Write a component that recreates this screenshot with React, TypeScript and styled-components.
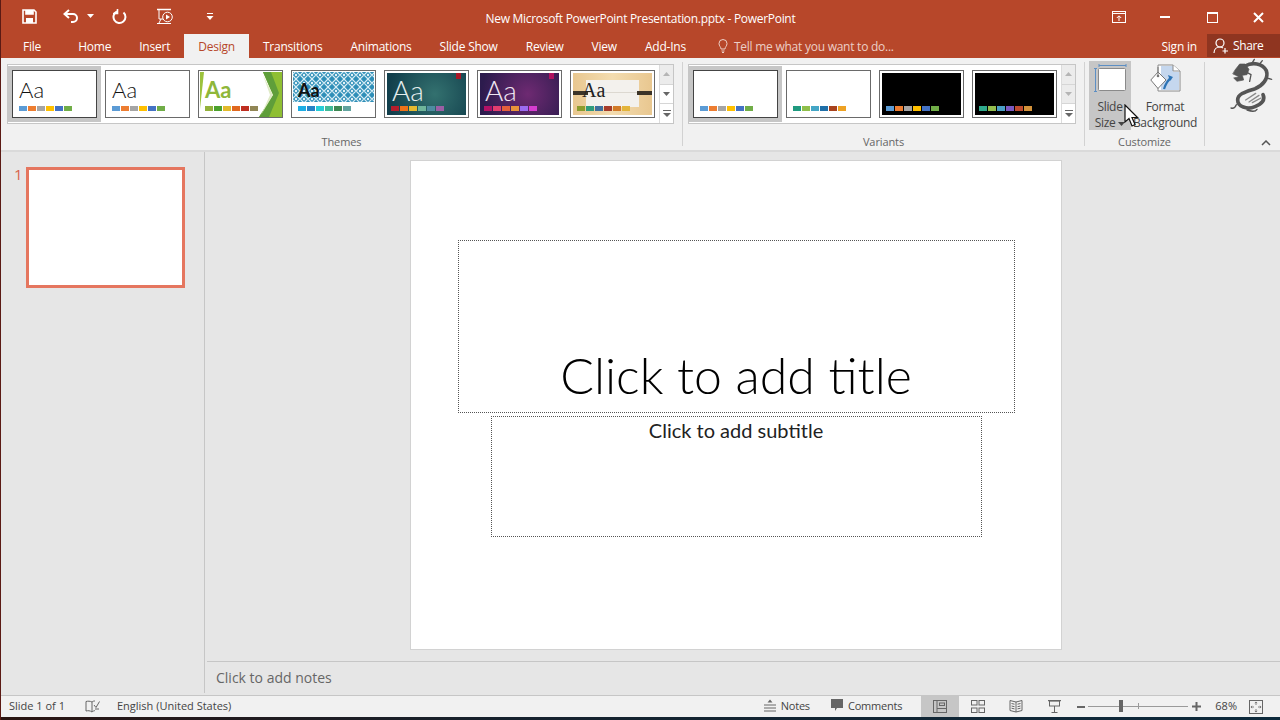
import React, { FC } from 'react';
import styled, { createGlobalStyle } from 'styled-components';

const GlobalStyle = createGlobalStyle`
	html, body {
		margin: 0;
		padding: 0;
		background: #0d2a3c;
		overflow: hidden;
	}
	* {
		box-sizing: border-box;
	}
`;

const UI_FONT = `"Open Sans", "Noto Sans", sans-serif`;

const Window = styled.div`
	width: 1280px;
	height: 720px;
	display: flex;
	flex-direction: column;
	position: relative;
	border-left: 1px solid #5b1a14;
	background: #e6e6e6;
	font-family: ${UI_FONT};
	font-size: 12px;
	color: #444;
	overflow: hidden;
`;

const TitleBar = styled.header`
	height: 30px;
	display: grid;
	grid-template-columns: 1fr auto 1fr;
	align-items: center;
	background: #b7472a;
	color: #fff;
`;

const QuickAccess = styled.div`
	display: flex;
	align-items: center;
	padding: 1px 0 0 20px;
	color: #fff;
`;

const QuickIcon = styled.span<{ $width: number }>`
	display: flex;
	align-items: center;
	justify-content: center;
	width: ${p => p.$width}px;
	height: 30px;
`;

const DocTitle = styled.div`
	font-size: 12px;
	letter-spacing: -0.3px;
	padding-top: 6px;
`;

const WindowControls = styled.div`
	display: flex;
	justify-content: flex-end;
	margin-right: -1px;
	color: #fff;
`;

const WindowButton = styled.span`
	width: 46px;
	height: 30px;
	display: flex;
	align-items: center;
	justify-content: center;
	padding-top: 3px;
	&:nth-child(2) {
		margin-right: 1px;
	}
`;

const TabBar = styled.nav`
	height: 28px;
	display: flex;
	align-items: stretch;
	background: #b7472a;
	color: #fff;
	padding-left: 8px;
`;

const Tab = styled.span<{ $active?: boolean }>`
	display: flex;
	align-items: center;
	margin-top: 4px;
	padding: 0 14px;
	background: ${p => (p.$active ? '#f1f1f1' : 'transparent')};
	color: ${p => (p.$active ? '#b7472a' : '#fff')};
	letter-spacing: -0.22px;
	white-space: nowrap;
	&:first-child {
		margin-right: 9px;
	}
`;

const TellMe = styled.span`
	display: flex;
	align-items: center;
	gap: 6px;
	margin: 4px 0 0 18px;
	color: #eccfc6;
	letter-spacing: -0.25px;
`;

const Account = styled.div`
	margin: 4px 0 0 auto;
	display: flex;
	align-items: center;
	gap: 10px;
	letter-spacing: -0.2px;
`;

const ShareButton = styled.span`
	width: 73px;
	height: 23px;
	margin-bottom: 1px;
	background: #8f3520;
	display: flex;
	align-items: center;
	gap: 4px;
	padding-left: 6px;
	letter-spacing: -0.4px;
`;

const Ribbon = styled.section`
	height: 94px;
	display: flex;
	background: #f1f1f1;
	border-bottom: 2px solid #dadada;
`;

const RibbonGroup = styled.div<{ $width: number; $inset: number }>`
	width: ${p => p.$width}px;
	display: flex;
	flex-direction: column;
	margin: 4px 0;
	padding-left: ${p => p.$inset}px;
	border-right: 1px solid #d2d2d2;
`;

const GroupBody = styled.div`
	flex: 1;
	padding-top: 2px;
	display: flex;
`;

const GroupLabel = styled.div<{ $inset: number }>`
	text-align: center;
	font-size: 11px;
	letter-spacing: -0.1px;
	color: #666;
	height: 16px;
	line-height: 16px;
	margin: 0 0 -4px -${p => p.$inset}px;
`;

const Gallery = styled.div`
	height: 60px;
	display: flex;
	border: 1px solid #c6c6c6;
	background: #fff;
`;

const GalleryItem = styled.div<{ $selected?: boolean }>`
	width: 93px;
	height: 56px;
	margin-top: 1px;
	padding: 4px;
	background: ${p => (p.$selected ? '#c6c6c6' : 'transparent')};
`;

const Thumb = styled.div<{ $bg: string; $ring?: boolean; $dark?: boolean }>`
	position: relative;
	width: 85px;
	height: 48px;
	border: 1px solid ${p => (p.$dark ? '#444' : '#6a6a6a')};
	background: ${p => p.$bg};
	overflow: hidden;
	display: flex;
	flex-direction: column;
	justify-content: flex-end;
	padding: 0 0 6px 6px;
	&::after {
		content: '';
		display: ${p => (p.$ring ? 'block' : 'none')};
		position: absolute;
		inset: 0;
		border: 2px solid #fff;
	}
`;

const ThumbAa = styled.span<{ $color: string; $font: string; $weight: number; $size: number; $shift: number }>`
	position: relative;
	font-family: ${p => p.$font};
	font-size: ${p => p.$size}px;
	font-weight: ${p => p.$weight};
	line-height: 20px;
	height: 20px;
	margin: 0 0 6px ${p => p.$shift}px;
	color: ${p => p.$color};
`;

const SwatchRow = styled.div`
	position: relative;
	display: flex;
	gap: 1px;
	height: 5px;
`;

const Swatch = styled.span<{ $color: string }>`
	width: 8px;
	height: 5px;
	background: ${p => p.$color};
`;

const ThumbArtSvg = styled.svg`
	position: absolute;
	left: 0;
	top: 0;
	width: 83px;
	height: 46px;
`;

const GalleryScroll = styled.div`
	width: 14px;
	display: flex;
	flex-direction: column;
	border-left: 1px solid #dcdcdc;
`;

const ScrollButton = styled.span<{ $disabled?: boolean }>`
	flex: 1;
	display: flex;
	align-items: center;
	justify-content: center;
	background: ${p => (p.$disabled ? '#ececec' : '#fff')};
	color: ${p => (p.$disabled ? '#b5b5b5' : '#666')};
	border-bottom: 1px solid #d6d6d6;
	&:last-child {
		border-bottom: none;
	}
`;

const CommandRow = styled.div`
	display: flex;
	gap: 4px;
	margin-top: -3px;
`;

const CommandButton = styled.div<{ $width: number; $active?: boolean }>`
	width: ${p => p.$width}px;
	height: 69px;
	display: flex;
	flex-direction: column;
	align-items: center;
	background: ${p => (p.$active ? '#c6c6c6' : 'transparent')};
	color: #444;
	line-height: 16px;
	white-space: nowrap;
	letter-spacing: -0.3px;
`;

const CommandIcon = styled.span`
	height: 38px;
	flex-shrink: 0;
	display: flex;
	align-items: flex-start;
	padding-top: 3px;
`;

const DragonSlot = styled.div`
	flex: 1;
	position: relative;
	display: flex;
	justify-content: flex-end;
	align-items: flex-start;
	padding-right: 5px;
`;

const CollapseRibbon = styled.span`
	position: absolute;
	right: 9px;
	bottom: 4px;
	display: flex;
	color: #555;
`;

const Workspace = styled.main`
	flex: 1;
	display: flex;
	min-height: 0;
`;

const ThumbPanel = styled.aside`
	width: 204px;
	display: flex;
	align-items: flex-start;
	gap: 4px;
	padding: 15px 0 0 13px;
	border-right: 1px solid #c6c6c6;
	margin-bottom: 2px;
`;

const SlideNumber = styled.span`
	font-size: 15px;
	line-height: 16px;
	margin-top: -1px;
	color: #d9634a;
	width: 8px;
`;

const SlideThumb = styled.div`
	width: 159px;
	height: 121px;
	background: #fff;
	border: 3px solid #e5765f;
`;

const Editor = styled.div`
	flex: 1;
	display: flex;
	flex-direction: column;
	min-width: 0;
`;

const Stage = styled.div`
	flex: 1;
	display: flex;
	justify-content: center;
	padding: 8px 13px 0 0;
`;

const Slide = styled.div`
	width: 652px;
	height: 490px;
	background: #fff;
	border: 1px solid #d2d2d2;
	display: flex;
	flex-direction: column;
	align-items: center;
	padding-top: 79px;
	gap: 3px;
`;

const TitleHolder = styled.div`
	width: 557px;
	height: 173px;
	border: 1px dotted #555;
	display: flex;
	align-items: flex-end;
	justify-content: center;
	font-family: Lato, "Liberation Sans", sans-serif;
	font-weight: 300;
	font-size: 50px;
	line-height: 60px;
	color: #000;
	padding-bottom: 7px;
`;

const SubtitleHolder = styled.div`
	width: 491px;
	height: 121px;
	border: 1px dotted #555;
	text-align: center;
	font-family: Lato, "Liberation Sans", sans-serif;
	font-size: 20px;
	line-height: 26px;
	color: #222;
`;

const NotesPane = styled.div`
	height: 34px;
	margin-left: 2px;
	border-top: 1px solid #c6c6c6;
	display: flex;
	align-items: center;
	padding: 0 0 2px 9px;
	font-size: 14px;
	color: #666;
`;

const StatusBar = styled.footer`
	height: 22px;
	display: flex;
	align-items: stretch;
	background: #f1f1f1;
	border-top: 1px solid #c6c6c6;
	font-size: 11px;
	color: #444;
`;

const StatusText = styled.span`
	display: flex;
	align-items: center;
	gap: 5px;
	white-space: nowrap;
	line-height: 15px;
	padding-bottom: 3px;
`;

const StatusLeft = styled.div`
	display: flex;
	align-items: center;
	padding-left: 8px;
	gap: 20px;
`;

const SpellSlot = styled.span`
	display: flex;
	margin-right: -3px;
`;

const StatusRight = styled.div`
	margin-left: auto;
	display: flex;
	align-items: stretch;
	padding-right: 5px;
`;

const ViewButton = styled.span<{ $active?: boolean }>`
	width: 38px;
	display: flex;
	align-items: center;
	justify-content: center;
	background: ${p => (p.$active ? '#c6c6c6' : 'transparent')};
`;

const NotesToggles = styled.div`
	display: flex;
	align-items: center;
	gap: 21px;
	margin-right: 19px;
	letter-spacing: -0.2px;
`;

const ZoomSlider = styled.div`
	width: 100px;
	height: 1px;
	background: #9a9a9a;
	align-self: center;
	position: relative;
	margin: 0 4px 0 3px;
`;

const ZoomHandle = styled.span`
	position: absolute;
	left: 31px;
	top: -6px;
	width: 4px;
	height: 12px;
	background: #666;
`;

const ZoomTick = styled.span`
	position: absolute;
	left: 50px;
	top: -3px;
	width: 1px;
	height: 6px;
	background: #9a9a9a;
`;

const ZoomSign = styled.span`
	display: flex;
	align-items: center;
	color: #555;
`;

const ZoomMinus = styled(ZoomSign)`
	margin-left: 4px;
`;

const ZoomValue = styled.span`
	display: flex;
	align-items: center;
	margin-left: 14px;
	padding-bottom: 3px;
`;

const DesktopStrip = styled.div`
	height: 3px;
	flex-shrink: 0;
	background: linear-gradient(90deg, #2a1512 0%, #16222e 40%, #0d2a3c 100%);
`;

const Pointer = styled.svg`
	position: absolute;
	left: 1123px;
	top: 104px;
`;

const office = ['#5b9bd5', '#ed7d31', '#a5a5a5', '#ffc000', '#4472c4', '#70ad47'];

type ThemeDef = {
	bg: string;
	colors: string[];
	aa?: string;
	font?: string;
	weight?: number;
	size?: number;
	shift?: number;
	art?: string;
	ring?: boolean;
	dark?: boolean;
};

const themes: ThemeDef[] = [
	{ bg: '#fff', colors: office, dark: true },
	{ bg: '#fff', colors: office },
	{ bg: '#fff', colors: ['#93b13a', '#4ca12c', '#e3b92a', '#e0681f', '#bf2e21', '#918655'], aa: '#8fb73a', weight: 700, art: 'facet' },
	{ bg: '#fff', colors: ['#1cade4', '#2683c6', '#27ced7', '#42ba97', '#3e8853', '#62a39f'], aa: '#111', weight: 700, size: 18, art: 'lattice' },
	{ bg: 'radial-gradient(circle at 60% 50%, #33716f 0%, #123f4c 85%)', colors: ['#b71e2c', '#ee7218', '#e5b92f', '#6fb59a', '#4d8ba0', '#9c5fa5'], aa: '#e6eeee', size: 28, shift: 1, art: 'ribbonRed', ring: true },
	{ bg: 'radial-gradient(circle at 60% 50%, #6e2a72 0%, #2c1b4d 85%)', colors: ['#b31166', '#e33d6f', '#e45f3c', '#e9943a', '#9b6bf2', '#d53dd0'], aa: '#f1e6f2', size: 28, shift: 1, art: 'ribbonPink', ring: true },
	{ bg: 'linear-gradient(90deg, #e8c68e 0%, #f3dcb0 50%, #e8c68e 100%)', colors: ['#8c9d2d', '#2f9c7c', '#3f6f9d', '#a63b2a', '#d27a27', '#e3b43a'], aa: '#222', font: '"Liberation Serif", serif', size: 20, shift: 5, art: 'wood', ring: true },
];

const variants: ThemeDef[] = [
	{ bg: '#fff', colors: office, dark: true },
	{ bg: '#fff', colors: ['#1f9a7f', '#8fbf4a', '#44a6c6', '#1f6fa8', '#a9431e', '#eea224'] },
	{ bg: '#000', colors: office, ring: true },
	{ bg: '#000', colors: ['#2fa98c', '#93bd4e', '#4a9fc6', '#7a58c1', '#bc4a2f', '#d3923a'], ring: true },
];

const ThumbArt: FC<{ kind: string }> = ({ kind }) => {
	if (kind === 'facet') {
		return <ThumbArtSvg viewBox='0 0 83 46'>
			<polygon points='1,1 5,1 1,38' fill='#9cc23c' />
			<polygon points='64,1 83,1 83,46 60,46 74,24' fill='#8fbf33' />
			<polygon points='64,1 74,24 60,46 70,46 80,22 72,1' fill='#5f9e3a' />
			<polygon points='64,4 74,24 62,44 71,24' fill='#dfeac6' />
		</ThumbArtSvg>;
	}
	if (kind === 'lattice') {
		return <ThumbArtSvg viewBox='0 0 83 46'>
			<defs>
				<pattern id='lattice' width='8' height='8' patternUnits='userSpaceOnUse'>
					<rect width='8' height='8' fill='#2f8fb8' />
					<path d='M0 4 L4 0 L8 4 L4 8 Z' fill='none' stroke='#d8edf5' strokeWidth='1.2' />
					<circle cx='4' cy='4' r='1.2' fill='#e6f3f8' />
				</pattern>
			</defs>
			<rect x='1' y='1' width='81' height='30' fill='url(#lattice)' />
		</ThumbArtSvg>;
	}
	if (kind === 'ribbonRed' || kind === 'ribbonPink') {
		return <ThumbArtSvg viewBox='0 0 83 46'>
			<rect x='71' y='1' width='5' height='7' fill={kind === 'ribbonRed' ? '#a81626' : '#b0125f'} />
		</ThumbArtSvg>;
	}
	if (kind === 'wood') {
		return <ThumbArtSvg viewBox='0 0 83 46'>
			<rect x='15' y='9' width='53' height='27' fill='#f3f1ed' />
			<rect x='15' y='21' width='53' height='1' fill='#dcd8d0' />
			<rect x='1' y='20' width='16' height='4' fill='#3c3428' />
			<rect x='66' y='20' width='17' height='4' fill='#3c3428' />
		</ThumbArtSvg>;
	}
	return null;
};

const ThemeThumb: FC<{ theme: ThemeDef; text?: boolean; selected?: boolean }> = ({ theme, text, selected }) => {
	return <GalleryItem $selected={selected}>
		<Thumb $bg={theme.bg} $ring={theme.ring} $dark={theme.dark}>
			{theme.art && <ThumbArt kind={theme.art} />}
			{text && <ThumbAa
				$color={theme.aa || '#111'}
				$font={theme.font || 'Lato, sans-serif'}
				$weight={theme.weight || 300}
				$size={theme.size || 22}
				$shift={theme.shift || 0}
			>Aa</ThumbAa>}
			<SwatchRow>
				{theme.colors.map((c, i) => <Swatch key={i} $color={c} />)}
			</SwatchRow>
		</Thumb>
	</GalleryItem>;
};

const Caret: FC<{ dir: 'up' | 'down' }> = ({ dir }) => <svg width='7' height='4' viewBox='0 0 7 4' style={{ verticalAlign: 'middle' }}>
	<polygon points={dir === 'up' ? '0,4 7,4 3.5,0' : '0,0 7,0 3.5,4'} fill='currentColor' />
</svg>;

const MoreIcon: FC = () => <svg width='8' height='7' viewBox='0 0 8 7'>
	<rect x='0' y='0' width='8' height='1' fill='currentColor' />
	<polygon points='0,3 8,3 4,7' fill='currentColor' />
</svg>;

const Scroller: FC<{ lockDown?: boolean }> = ({ lockDown }) => <GalleryScroll>
	<ScrollButton $disabled><Caret dir='up' /></ScrollButton>
	<ScrollButton $disabled={lockDown}><Caret dir='down' /></ScrollButton>
	<ScrollButton><MoreIcon /></ScrollButton>
</GalleryScroll>;

const SaveIcon: FC = () => <svg width='15' height='15' viewBox='0 0 15 15' fill='none' stroke='#fff' strokeWidth='1.6'>
	<path d='M1 1h11l2 2v11H1z' />
	<path d='M4 1v4h7V1' fill='#fff' />
	<rect x='4' y='9' width='7' height='5' fill='#fff' stroke='none' />
</svg>;

const UndoIcon: FC = () => <svg width='16' height='14' viewBox='0 0 16 14' fill='none' stroke='#fff' strokeWidth='2'>
	<path d='M6 1 L1.5 5 L6 9' />
	<path d='M2 5 H10 a4 4 0 0 1 0 8 H8' />
</svg>;

const RedoIcon: FC = () => <svg width='15' height='15' viewBox='0 0 15 15' fill='none' stroke='#fff' strokeWidth='2'>
	<path d='M5 2.5 A6 6 0 1 0 11.5 3.5' />
	<path d='M5.5 0 V4.5 H1' strokeWidth='1.6' />
</svg>;

const StartShowIcon: FC = () => <svg width='18' height='17' viewBox='0 0 18 17' fill='none' stroke='#fff' strokeWidth='1'>
	<path d='M1 1.5 H15' strokeWidth='1.5' />
	<path d='M3 2 V11 H7' />
	<path d='M5 11 L3 15 M1 15.5 H9' />
	<circle cx='11.5' cy='9' r='4.8' />
	<polygon points='10,6.5 14,9 10,11.5' fill='#fff' stroke='none' />
	<path d='M8 15.5 H15' />
</svg>;

const CustomizeIcon: FC = () => <svg width='8' height='8' viewBox='0 0 8 8'>
	<rect x='1' y='1' width='6' height='1' fill='#fff' />
	<polygon points='0.5,4 7.5,4 4,8' fill='#fff' />
</svg>;

const RibbonDisplayIcon: FC = () => <svg width='14' height='12' viewBox='0 0 14 12' fill='none' stroke='#fff'>
	<rect x='0.5' y='0.5' width='13' height='11' />
	<path d='M1 2.5 H13' />
	<path d='M7 10 V5 M4.8 7 L7 4.8 L9.2 7' />
</svg>;

const BulbIcon: FC = () => <svg width='10' height='14' viewBox='0 0 10 14' fill='none' stroke='#eccfc6'>
	<path d='M3 10 C3 8 1 7 1 4.5 a4 4 0 0 1 8 0 C9 7 7 8 7 10 Z' />
	<path d='M3.5 12 H6.5 M4 13.5 H6' />
</svg>;

const ShareIcon: FC = () => <svg width='16' height='16' viewBox='0 0 16 16' fill='none' stroke='#fff' strokeWidth='1.2'>
	<circle cx='7' cy='5' r='4' />
	<path d='M1 15 C1 11 4 9 7 9 C8 9 9 9.3 10 10' />
	<path d='M12 10 V15.5 M9.5 13 H15' />
</svg>;

const SlideSizeIcon: FC = () => <svg width='33' height='28' viewBox='0 0 33 28' fill='none'>
	<path d='M5 1.5 H32 M5 0 V3 M32 0 V3' stroke='#5d8fc4' />
	<path d='M0 4.5 H3 M0 27.5 H3 M1.5 4.5 V27.5' stroke='#5d8fc4' />
	<rect x='4.5' y='4.5' width='27' height='22' rx='1' fill='#fff' stroke='#8a8a8a' />
</svg>;

const FormatBgIcon: FC = () => <svg width='31' height='28' viewBox='0 0 31 28' fill='none'>
	<path d='M8 1 H23 L30 7 V27 H8 Z' fill='#fff' stroke='#8a8a8a' />
	<path d='M11 2 H23 V8 H29 V26 H11 Z' fill='#c5d7ee' />
	<path d='M23 1 V7 H30' fill='#fff' stroke='#8a8a8a' />
	<path d='M0.8 16 L8 8 L16 16 L8 24.5 Z' fill='#fff' stroke='#777' />
	<path d='M8 3 V12' stroke='#777' />
	<circle cx='8' cy='12' r='1.3' fill='#777' />
	<path d='M14 25 C16 19 18 16 21 14' stroke='#2e75b6' strokeWidth='2.2' />
	<path d='M18 11 L23 13 L20 17 Z' fill='#2e75b6' />
</svg>;

const DragonIcon: FC = () => <svg width='50' height='60' viewBox='0 0 150 180' fill='none' stroke='#555' strokeLinecap='round'>
	<path d='M30 36 L44 18 L60 18 L72 34 L66 50 L52 52 L56 66 L36 70 L26 60 L42 56 L24 48 Z' fill='#555' strokeWidth='2' />
	<path d='M60 24 C82 12 112 15 124 38 C132 62 112 84 90 92 C66 100 38 106 38 126 C38 146 66 156 90 146 C110 138 122 126 114 110' strokeWidth='11' />
	<path d='M62 126 L92 106 M72 132 L102 112 M82 134 L108 120' strokeWidth='4' stroke='#8a8a8a' />
	<path d='M34 140 C30 150 24 152 18 150 M82 14 L88 4 M104 18 L112 8 M126 60 L140 64 M96 154 C90 164 78 160 66 156 M60 40 L78 50 L74 70' strokeWidth='4' />
</svg>;

const ChevronUpIcon: FC = () => <svg width='10' height='6' viewBox='0 0 10 6' fill='none' stroke='currentColor' strokeWidth='1.5'>
	<path d='M1 5 L5 1 L9 5' />
</svg>;

const SpellIcon: FC = () => <svg width='15' height='13' viewBox='0 0 15 13' fill='none' stroke='#666'>
	<path d='M7 2 C5 1 3 1 1 1.5 V11 C3 10.5 5 10.5 7 12 C8 11 9 10.8 10 10.6 M7 2 V12 M7 2 C8 1 9 1 10 1' />
	<path d='M9 5 L11 7.5 L14.5 1.5 M10 9 H14' />
</svg>;

const NotesIcon: FC = () => <svg width='12' height='13' viewBox='0 0 12 13' fill='none' stroke='#666'>
	<polygon points='3.5,3.5 8.5,3.5 6,0.5' fill='#666' stroke='none' />
	<path d='M0 6 H12 M0 9 H12 M0 12 H12' />
</svg>;

const CommentIcon: FC = () => <svg width='12' height='13' viewBox='0 0 12 13'>
	<path d='M0 0 H12 V9 H6 L4 12 V9 H0 Z' fill='#666' />
</svg>;

const NormalViewIcon: FC = () => <svg width='14' height='13' viewBox='0 0 14 13' fill='none' stroke='#666'>
	<rect x='0.5' y='0.5' width='13' height='12' />
	<path d='M4 1 V12 M4 8.5 H13' />
	<rect x='6.5' y='3' width='5' height='2.5' />
</svg>;

const SorterIcon: FC = () => <svg width='14' height='13' viewBox='0 0 14 13' fill='none' stroke='#666'>
	<rect x='0.5' y='0.5' width='5.5' height='4.5' />
	<rect x='8' y='0.5' width='5.5' height='4.5' />
	<rect x='0.5' y='8' width='5.5' height='4.5' />
	<rect x='8' y='8' width='5.5' height='4.5' />
</svg>;

const ReadingIcon: FC = () => <svg width='14' height='13' viewBox='0 0 14 13' fill='none' stroke='#666'>
	<path d='M7 2 L1 0.5 V10.5 L7 12 L13 10.5 V0.5 Z M7 2 V12' />
	<path d='M2.5 3.5 L5.5 4.2 M2.5 6 L5.5 6.7 M2.5 8.2 L5.5 8.9 M11.5 3.5 L8.5 4.2 M11.5 6 L8.5 6.7 M11.5 8.2 L8.5 8.9' />
</svg>;

const ShowIcon: FC = () => <svg width='13' height='13' viewBox='0 0 13 13' fill='none' stroke='#666'>
	<path d='M0 0.5 H13' strokeWidth='1.5' />
	<rect x='1.5' y='1' width='10' height='5' />
	<path d='M6.5 6 V12 M3.5 12.5 H9.5' />
</svg>;

const FitIcon: FC = () => <svg width='14' height='14' viewBox='0 0 14 14' fill='none' stroke='#666'>
	<rect x='0.5' y='0.5' width='13' height='13' />
	<path d='M7 2 V5 M5.8 3 L7 2 L8.2 3 M7 12 V9 M5.8 11 L7 12 L8.2 11 M2 7 H5 M3 5.8 L2 7 L3 8.2 M12 7 H9 M11 5.8 L12 7 L11 8.2' strokeWidth='0.8' />
</svg>;

const App: FC = () => {
	return <Window>
		<GlobalStyle />
		<TitleBar>
			<QuickAccess>
				<QuickIcon $width={17}><SaveIcon /></QuickIcon>
				<QuickIcon $width={25} />
				<QuickIcon $width={16}><UndoIcon /></QuickIcon>
				<QuickIcon $width={22}><Caret dir='down' /></QuickIcon>
				<QuickIcon $width={36}><RedoIcon /></QuickIcon>
				<QuickIcon $width={56}><StartShowIcon /></QuickIcon>
				<QuickIcon $width={34}><CustomizeIcon /></QuickIcon>
			</QuickAccess>
			<DocTitle>New Microsoft PowerPoint Presentation.pptx - PowerPoint</DocTitle>
			<WindowControls>
				<WindowButton><RibbonDisplayIcon /></WindowButton>
				<WindowButton><svg width='10' height='2'><rect width='10' height='2' fill='#fff' /></svg></WindowButton>
				<WindowButton><svg width='11' height='11' fill='none' stroke='#fff'><rect x='0.5' y='0.5' width='10' height='10' /><path d='M0 1.5 H11' /></svg></WindowButton>
				<WindowButton><svg width='11' height='11' stroke='#fff' strokeWidth='2'><path d='M1 1 L10 10 M10 1 L1 10' /></svg></WindowButton>
			</WindowControls>
		</TitleBar>
		<TabBar>
			<Tab>File</Tab>
			<Tab>Home</Tab>
			<Tab>Insert</Tab>
			<Tab $active>Design</Tab>
			<Tab>Transitions</Tab>
			<Tab>Animations</Tab>
			<Tab>Slide Show</Tab>
			<Tab>Review</Tab>
			<Tab>View</Tab>
			<Tab>Add-Ins</Tab>
			<TellMe><BulbIcon />Tell me what you want to do...</TellMe>
			<Account>
				<span>Sign in</span>
				<ShareButton><ShareIcon />Share</ShareButton>
			</Account>
		</TabBar>
		<Ribbon>
			<RibbonGroup $width={682} $inset={6}>
				<GroupBody>
					<Gallery>
						{themes.map((t, i) => <ThemeThumb key={i} theme={t} text selected={i === 0} />)}
						<Scroller />
					</Gallery>
				</GroupBody>
				<GroupLabel $inset={6}>Themes</GroupLabel>
			</RibbonGroup>
			<RibbonGroup $width={402} $inset={5}>
				<GroupBody>
					<Gallery>
						{variants.map((t, i) => <ThemeThumb key={i} theme={t} selected={i === 0} />)}
						<Scroller lockDown />
					</Gallery>
				</GroupBody>
				<GroupLabel $inset={5}>Variants</GroupLabel>
			</RibbonGroup>
			<RibbonGroup $width={120} $inset={4}>
				<GroupBody>
					<CommandRow>
						<CommandButton $width={42} $active>
							<CommandIcon><SlideSizeIcon /></CommandIcon>
							<span>Slide</span>
							<span>Size <Caret dir='down' /></span>
						</CommandButton>
						<CommandButton $width={60}>
							<CommandIcon><FormatBgIcon /></CommandIcon>
							<span>Format</span>
							<span>Background</span>
						</CommandButton>
					</CommandRow>
				</GroupBody>
				<GroupLabel $inset={4}>Customize</GroupLabel>
			</RibbonGroup>
			<DragonSlot>
				<DragonIcon />
				<CollapseRibbon><ChevronUpIcon /></CollapseRibbon>
			</DragonSlot>
		</Ribbon>
		<Workspace>
			<ThumbPanel>
				<SlideNumber>1</SlideNumber>
				<SlideThumb />
			</ThumbPanel>
			<Editor>
				<Stage>
					<Slide>
						<TitleHolder>Click to add title</TitleHolder>
						<SubtitleHolder>Click to add subtitle</SubtitleHolder>
					</Slide>
				</Stage>
				<NotesPane>Click to add notes</NotesPane>
			</Editor>
		</Workspace>
		<StatusBar>
			<StatusLeft>
				<StatusText>Slide 1 of 1</StatusText>
				<SpellSlot><SpellIcon /></SpellSlot>
				<StatusText>English (United States)</StatusText>
			</StatusLeft>
			<StatusRight>
				<NotesToggles>
					<StatusText><NotesIcon />Notes</StatusText>
					<StatusText><CommentIcon />Comments</StatusText>
				</NotesToggles>
				<ViewButton $active><NormalViewIcon /></ViewButton>
				<ViewButton><SorterIcon /></ViewButton>
				<ViewButton><ReadingIcon /></ViewButton>
				<ViewButton><ShowIcon /></ViewButton>
				<ZoomMinus><svg width='8' height='8' viewBox='0 0 8 8'><rect y='3' width='8' height='2' fill='#666' /></svg></ZoomMinus>
				<ZoomSlider><ZoomHandle /><ZoomTick /></ZoomSlider>
				<ZoomSign><svg width='9' height='9' viewBox='0 0 9 9'><path d='M0 3.5h3.5V0h2v3.5H9v2H5.5V9h-2V5.5H0z' fill='#666' /></svg></ZoomSign>
				<ZoomValue>68%</ZoomValue>
				<ViewButton><FitIcon /></ViewButton>
			</StatusRight>
		</StatusBar>
		<DesktopStrip />
		<Pointer width='16' height='24' viewBox='0 0 16 24'>
			<path d='M1 1 V18 L5 14.5 L8 22 L11 20.5 L8 13.5 L13.5 13.5 Z' fill='#fff' stroke='#111' strokeWidth='1.2' />
		</Pointer>
	</Window>;
}

export default App;
